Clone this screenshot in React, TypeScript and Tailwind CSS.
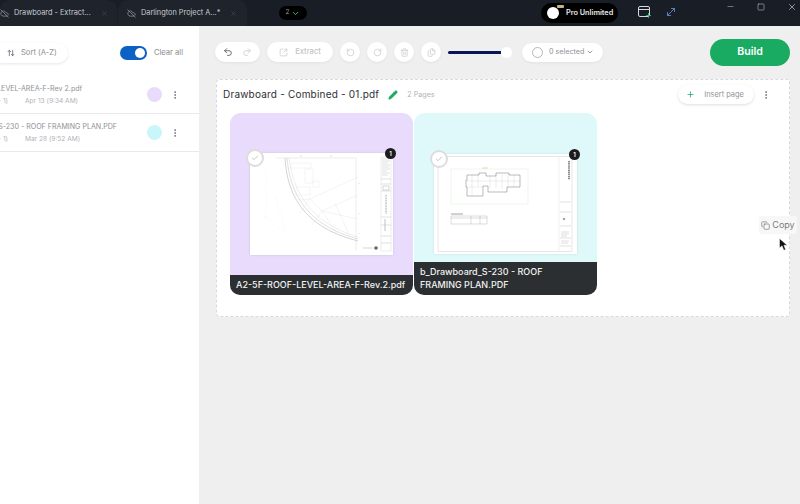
import React from "react";
import { CloudOff, X, ChevronDown, Undo2, Redo2, SquareArrowOutUpRight, RotateCcw, RotateCw, Trash2, Files, Plus, EllipsisVertical, Pencil, ArrowUpDown, Check, Copy, Minus, Square, MoveDiagonal } from "lucide-react";

function Tab({ title, className }: { title: string; className: string }) {
  return (
    <div className={`flex h-[26px] items-center rounded-t-[10px] bg-[#1f232c] ${className}`}>
      <CloudOff size={9} className="shrink-0 text-[#8f96a3]" />
      <span className="ml-[5px] whitespace-nowrap text-[7.35px] text-[#c9ccd2]">{title}</span>
      <X size={7} className="ml-auto shrink-0 text-[#4a505c]" />
    </div>
  );
}

function FileRow({ name, date, dot, ml }: { name: string; date: string; dot: string; ml: string }) {
  return (
    <div className="flex h-[38px] items-center overflow-hidden border-b border-[#e9e9e9] pr-[19px]">
      <div className={`flex shrink-0 flex-col gap-[3px] whitespace-nowrap ${ml}`}>
        <span className="text-[7.1px] leading-[10px] text-[#8f9297]">{name}</span>
        <span className="flex text-[6.6px] leading-[9px] text-[#b0b2b6]">
          <span className="w-[58px] text-right">(Page 1 - 1)</span>
          <span className="ml-[17px]">{date}</span>
        </span>
      </div>
      <div className={`ml-auto h-[15px] w-[15px] shrink-0 rounded-full ${dot}`} />
      <EllipsisVertical size={10} className="ml-[8px] shrink-0 text-[#666a70]" />
    </div>
  );
}

function RoundBtn({ children }: { children: React.ReactNode }) {
  return (
    <div className="flex h-[20px] w-[20px] items-center justify-center rounded-full bg-white shadow-[0_1px_3px_rgba(0,0,0,0.06)]">
      {children}
    </div>
  );
}

function Sheet1() {
  return (
    <svg viewBox="0 0 143 102" className="h-[102px] w-[143px]" fill="none">
      <rect width="143" height="102" fill="#fff" />
      <path d="M131 4h10v94h-10z" stroke="#d0d0d0" strokeWidth="0.4" />
      <path d="M132 6h7M132 8h8M132 10h6M132 12h8M132 14h7M132 16h8M132 18h5M132 20h8M132 22h6M131 26h10M131 31h10M131 38h10M131 64h10M131 72h10M131 83h10M131 90h10" stroke="#c0c0c0" strokeWidth="0.5" />
      <path d="M133 33h6v4h-6z" stroke="#999" strokeWidth="0.4" />
      <path d="M136 42v19" stroke="#9a9a9a" strokeWidth="1" strokeDasharray="1 .6" />
      <path d="M135 66v12" stroke="#b0b0b0" strokeWidth="0.8" />
      <path d="M26 5H106V98" stroke="#cfcfcf" strokeWidth="0.35" />
      <path d="M35 5C37 40 52 74 108 88" stroke="#b0b0b0" strokeWidth="0.55" />
      <path d="M37 5C40 40 56 72 108 86" stroke="#c0c0c0" strokeWidth="0.5" />
      <path d="M39 5C43 38 60 70 108 84" stroke="#d4d4d4" strokeWidth="0.4" />
      <path d="M48 47 60 46 72 58 108 42M72 58 62 72M72 58 88 82M60 46 108 24M60 46 50 60M85 50 100 84M72 58 108 66" stroke="#d8d8d8" strokeWidth="0.3" />
      <path d="M41 10h20v5H41zM55 16v14h8v-14zM46 34h14v8H46zM63 28h6v6h-6z" stroke="#dadada" strokeWidth="0.3" />
      <path d="M16 18v50M24 40l12 38M10 60l26 20" stroke="#e4e4e4" strokeWidth="0.4" strokeDasharray="1 2" />
      <circle cx="126" cy="95" r="1.8" fill="#666" />
      <path d="M113 95h10" stroke="#aaa" strokeWidth="0.5" />
      <path d="M109 30v1M109 60v1M109 80v1M50 3h2M80 3h2" stroke="#bbb" strokeWidth="0.5" />
    </svg>
  );
}

function Sheet2() {
  return (
    <svg viewBox="0 0 143 100" className="h-[100px] w-[143px]" fill="none">
      <rect width="143" height="100" fill="#fff" />
      <rect x="4" y="2.5" width="134" height="95" stroke="#dcdcdc" strokeWidth="0.7" />
      <path d="M125 3v94" stroke="#dcdcdc" strokeWidth="0.4" />
      <path d="M126 48h11M126 58h11M126 72h11M126 84h11M126 92h11" stroke="#c0c0c0" strokeWidth="0.5" />
      <path d="M135 7v19" stroke="#555" strokeWidth="1.3" strokeDasharray="1.5 .6" />
      <rect x="17" y="15" width="77" height="35" stroke="#d6ead0" strokeWidth="0.4" />
      <path d="M48 14h6" stroke="#e2a86a" strokeWidth="0.5" />
      <path d="M33 21h12v-2h7v3h10v-3h13v2h11v12H73v5H54v-6H49v10H33v-9h-1V26h1z" stroke="#666" strokeWidth="0.45" />
      <path d="M38 21v21M44 21v11M56 22v12M62 20v14M68 20v15M74 21v12M80 21v12M33 27h53M32 33h17" stroke="#a8a8a8" strokeWidth="0.22" />
      <path d="M17 62h36v8H17zM17 64h36M37 62v8M46 62v8" stroke="#8a8a8a" strokeWidth="0.3" />
      <path d="M17 60h12" stroke="#666" strokeWidth="0.6" />
      <circle cx="130" cy="65" r="1.3" fill="#aaa" />
      <path d="M127 78h8M127 80h8M127 82h6M127 87h8M127 89h7" stroke="#ababab" strokeWidth="0.4" />
    </svg>
  );
}

function ThumbCard({ bg, label, sheet, pt, tall }: { bg: string; label: string; sheet: React.ReactNode; pt: string; tall: boolean }) {
  return (
    <div className={`flex h-[182px] w-[183px] flex-col overflow-hidden rounded-[11px] rounded-b-[10px] ${bg}`}>
      <div className={`flex flex-1 justify-center ${pt}`}>
        <div className="relative h-fit shadow-[0_0_2px_rgba(0,0,0,0.12)]">
          {sheet}
          <div className="absolute -left-[4px] -top-[4px] flex h-[18px] w-[18px] items-center justify-center rounded-full border-2 border-[#dddddd] bg-white">
            <Check size={8} className="text-[#a9a9a9]" />
          </div>
          <div className="absolute -right-[3px] -top-[5px] flex h-[11px] w-[11px] items-center justify-center rounded-full bg-[#1c1c1e] text-[6px] font-semibold leading-none text-white">1</div>
        </div>
      </div>
      <div className={`flex items-center bg-[#2b2f31] pl-[6px] text-[9px] font-medium leading-[12.7px] text-[#f2f2f2] ${tall ? "h-[33px] pr-[30px]" : "h-[20px] whitespace-nowrap"}`}>
        {label}
      </div>
    </div>
  );
}

function Cursor() {
  return (
    <svg viewBox="0 0 9 13" className="absolute left-[779px] top-[238px] h-[13px] w-[9px]">
      <path d="M0.5 0.5V10L3 7.8 4.8 12.3 6.6 11.5 4.9 7.2H8.2z" fill="#111" stroke="#fff" strokeWidth="0.5" />
    </svg>
  );
}

export default function App() {
  return (
    <div className="relative flex h-[504px] w-[800px] flex-col overflow-hidden bg-white font-['Inter',sans-serif]">
      <header className="flex h-[26px] shrink-0 items-center bg-[#191d26]">
        <Tab title="Drawboard - Extract..." className="w-[117px] pr-[9px]" />
        <Tab title="Darlington Project A...*" className="ml-px w-[129px] pl-[9px] pr-[10px]" />
        <div className="ml-[32px] flex h-[14px] w-[28px] items-center justify-center gap-[2px] rounded-full bg-black">
          <span className="text-[6.5px] text-[#9a9a9a]">2</span>
          <ChevronDown size={9} strokeWidth={2.5} className="text-[#37c47a]" />
        </div>
        <div className="ml-[234px] flex h-[20px] w-[77px] shrink-0 items-center rounded-full bg-black pl-[6px]">
          <div className="relative h-[12px] w-[12px] shrink-0 rounded-full bg-white">
            <span className="absolute -right-[5px] -top-[2px] h-[3px] w-[7px] rounded-[1px] bg-[#c9b283]" />
          </div>
          <span className="ml-[7px] whitespace-nowrap text-[7.3px] font-semibold text-[#e9e9e9]">Pro Unlimited</span>
        </div>
        <div className="relative mb-[3px] ml-[20px] h-[11px] w-[12px] shrink-0 rounded-[2px] border border-[#d6d8dc]">
          <div className="mt-[2px] h-px w-full bg-[#d6d8dc]" />
          <Plus size={7} strokeWidth={3} className="absolute -bottom-[3px] -right-[3px] text-[#37c47a]" />
        </div>
        <MoveDiagonal size={12} className="mb-[2px] ml-[15px] shrink-0 text-[#5c7fb5]" />
        <div className="mb-[13px] ml-[49px] flex items-center">
          <Minus size={9} className="text-[#8a8e96]" />
          <Square size={8} className="ml-[22px] text-[#a8abb1]" />
          <X size={10} className="ml-[22px] text-[#a8abb1]" />
        </div>
      </header>

      <div className="flex flex-1">
        <aside className="flex w-[199px] shrink-0 flex-col overflow-hidden bg-white">
          <div className="flex h-[50px] items-center pr-[16px] pt-[4px]">
            <div className="-ml-[11px] flex h-[20px] w-[80px] items-center rounded-full bg-white pl-[18px] shadow-[0_1px_3px_rgba(0,0,0,0.1)]">
              <ArrowUpDown size={8} className="text-[#3f4a5a]" />
              <span className="ml-[6px] whitespace-nowrap text-[7.6px] text-[#8a8d92]">Sort (A-Z)</span>
            </div>
            <div className="ml-[52px] flex h-[14px] w-[27px] items-center justify-end rounded-full bg-[#0b62c4] pr-[2px]">
              <div className="h-[10px] w-[10px] rounded-full bg-white" />
            </div>
            <span className="ml-[7px] whitespace-nowrap text-[7.6px] text-[#8a8d92]">Clear all</span>
          </div>
          <div className="flex flex-col gap-0">
            <FileRow name="A2-5F-ROOF-LEVEL-AREA-F-Rev 2.pdf" date="Apr 13 (9:34 AM)" dot="bg-[#e8dbfb]" ml="-ml-[50px]" />
            <FileRow name="b_Drawboard_S-230 - ROOF FRAMING PLAN.PDF" date="Mar 28 (9:52 AM)" dot="bg-[#c8f6fb]" ml="-ml-[50px]" />
          </div>
        </aside>

        <main className="flex flex-1 flex-col bg-[#efefef] pl-[18px] pr-[10px]">
          <div className="flex h-[53px] items-center pb-[1px]">
            <div className="ml-[-2px] flex h-[20px] w-[45px] items-center justify-center gap-[9px] rounded-full bg-white shadow-[0_1px_3px_rgba(0,0,0,0.06)]">
              <Undo2 size={10} className="text-[#4f5560]" />
              <Redo2 size={10} className="text-[#c9cbcf]" />
            </div>
            <div className="ml-[7px] flex h-[20px] w-[66px] items-center justify-center gap-[7px] rounded-full bg-white shadow-[0_1px_3px_rgba(0,0,0,0.06)]">
              <SquareArrowOutUpRight size={9} className="text-[#c9cbcf]" />
              <span className="text-[7.6px] font-medium text-[#c2c4c8]">Extract</span>
            </div>
            <div className="ml-[7px] flex items-center gap-[7px]">
              <RoundBtn><RotateCcw size={9} className="text-[#c9cbcf]" /></RoundBtn>
              <RoundBtn><RotateCw size={9} className="text-[#c9cbcf]" /></RoundBtn>
              <RoundBtn><Trash2 size={9} className="text-[#c9cbcf]" /></RoundBtn>
              <RoundBtn><Files size={9} className="text-[#c9cbcf]" /></RoundBtn>
            </div>
            <div className="ml-[7px] flex w-[64px] items-center">
              <div className="h-[3px] w-[53px] rounded-l-full bg-[#0b1454]" />
              <div className="h-[11px] w-[11px] rounded-full bg-white" />
            </div>
            <div className="ml-[10px] flex h-[19px] w-[81px] items-center rounded-full bg-white pl-[10px] shadow-[0_1px_3px_rgba(0,0,0,0.06)]">
              <div className="h-[11px] w-[11px] rounded-full border border-[#b5b7ba]" />
              <span className="ml-[6px] whitespace-nowrap text-[7.2px] text-[#8f9297]">0 selected</span>
              <ChevronDown size={8} className="ml-[2px] text-[#666a70]" />
            </div>
            <div className="ml-auto flex h-[27px] w-[80px] items-center justify-center rounded-full bg-[#1aab63] text-[10.6px] font-semibold text-white">Build</div>
          </div>

          <section className="ml-[-1px] h-[238px] rounded-[4px] border border-dashed border-[#d6d8e6] bg-white px-[12px]">
            <div className="-ml-[6px] -mr-[6px] mb-[4px] flex h-[29px] items-center">
              <span className="whitespace-nowrap text-[10px] tracking-[0.2px] text-[#2c2f33]">Drawboard - Combined - 01.pdf</span>
              <Pencil size={10} fill="#1aab63" className="ml-[9px] text-[#1aab63]" />
              <span className="ml-[9px] mt-[2px] text-[7.2px] text-[#b0b2b6]">2 Pages</span>
              <div className="ml-auto flex h-[19px] w-[76px] items-center justify-center gap-[9px] rounded-full bg-white pr-[2px] shadow-[0_1px_3px_rgba(0,0,0,0.13)]">
                <Plus size={9} className="text-[#1aab63]" />
                <span className="text-[7.4px] text-[#8f9297]">Insert page</span>
              </div>
              <EllipsisVertical size={10} className="ml-[7px] mr-[12px] text-[#666a70]" />
            </div>
            <div className="flex gap-px pl-[1px]">
              <ThumbCard bg="bg-[#e8dbfb]" label="A2-5F-ROOF-LEVEL-AREA-F-Rev.2.pdf" sheet={<Sheet1 />} pt="pt-[40px]" tall={false} />
              <ThumbCard bg="bg-[#dff9fa]" label="b_Drawboard_S-230 - ROOF FRAMING PLAN.PDF" sheet={<Sheet2 />} pt="pt-[41px]" tall={true} />
            </div>
          </section>
        </main>
      </div>

      <div className="absolute left-[759px] top-[216px] flex h-[18px] w-[38px] items-center justify-center gap-[2px] rounded-[2px] bg-[#f7f7f7] text-[9px] text-[#7a7d82]">
        <Copy size={9} className="text-[#7d8086]" />
        Copy
      </div>
      <Cursor />
    </div>
  );
}
